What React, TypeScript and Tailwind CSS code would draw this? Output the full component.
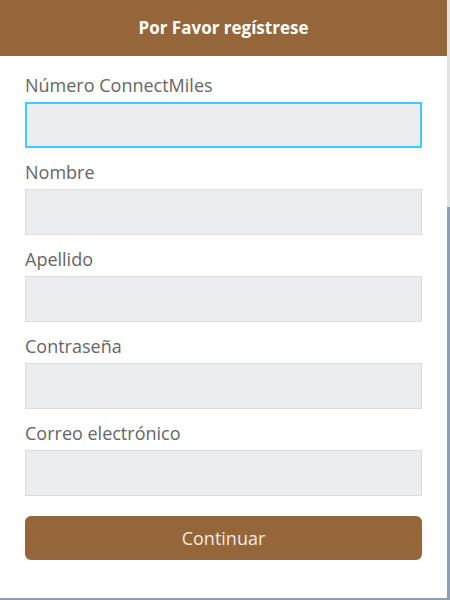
const fields = [
  { label: 'Número ConnectMiles', focused: true },
  { label: 'Nombre' },
  { label: 'Apellido' },
  { label: 'Contraseña' },
  { label: 'Correo electrónico' },
]

export default function App() {
  return (
    <div
      className="flex h-[600px] w-[450px] flex-col bg-white"
      style={{ fontFamily: '"Open Sans", "Noto Sans", sans-serif' }}
    >
      <div className="flex flex-1">
        <div className="flex w-[447px] flex-col">
          <header className="flex h-[56px] items-center justify-center bg-[#956639]">
            <h1 className="text-[17px] font-bold text-white">Por Favor regístrese</h1>
          </header>
          <form className="flex flex-col px-[25px] pt-[17px]">
            {fields.map((f) => (
              <div key={f.label} className="mb-[12px] flex flex-col">
                <label className="h-[24px] text-[18px] leading-[24px] text-[#666666]">{f.label}</label>
                <input
                  className={
                    f.focused
                      ? 'mt-[5px] h-[46px] w-full border-2 border-[#3dcdff] bg-[#ecedef] outline-none'
                      : 'mt-[5px] h-[46px] w-full border border-[#dcdcdc] bg-[#ecedef] outline-none'
                  }
                />
              </div>
            ))}
            <button
              type="button"
              className="mt-[8px] h-[44px] w-full rounded-[6px] bg-[#956639] text-[18px] text-[#f3ebe2]"
            >
              Continuar
            </button>
          </form>
        </div>
        <div className="flex w-[3px] flex-col">
          <div className="h-[207px] bg-[#e3e3e3]" />
          <div className="flex-1 bg-[#8e9eae]" />
        </div>
      </div>
      <div className="h-[2px] bg-[#8e9eae]" />
    </div>
  )
}
